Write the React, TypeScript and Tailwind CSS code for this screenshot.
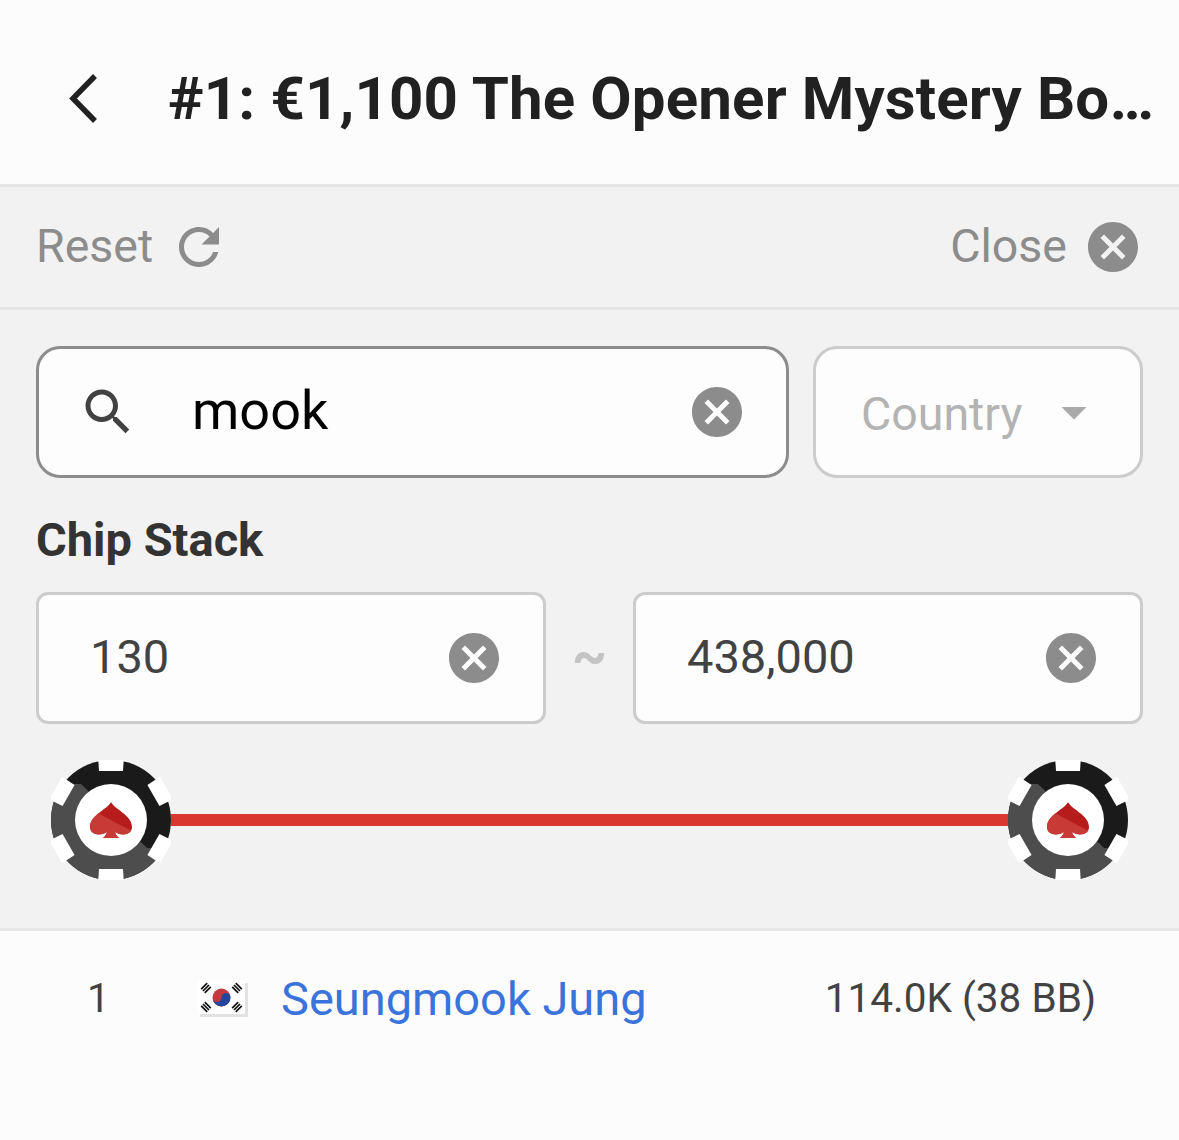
import React from 'react';

const ROBOTO = "font-['Roboto',sans-serif]";

function CancelIcon() {
  return (
    <svg viewBox="0 0 24 24" className="w-[60px] h-[60px] shrink-0" fill="#8c8c8c" aria-hidden="true">
      <path d="M12 2C6.47 2 2 6.47 2 12s4.47 10 10 10 10-4.47 10-10S17.53 2 12 2zm5 13.59L15.59 17 12 13.41 8.41 17 7 15.59 10.59 12 7 8.41 8.41 7 12 10.59 15.59 7 17 8.41 13.41 12 17 15.59z" />
    </svg>
  );
}

const SPADE =
  'M60 42C63 49 81 55 81 67C81 74 72 77 64 72C64.500 74 65.500 76 68 78H52C54.500 76 55.500 74 56 72C48 77 39 74 39 67C39 55 57 49 60 42Z';

function PokerChip() {
  const notches = [0, 60, 120, 180, 240, 300];
  return (
    <svg viewBox="0 0 120 120" className="w-[120px] h-[120px] shrink-0 blur-[0.6px]" aria-hidden="true">
      <defs>
        <clipPath id="chip-lower">
          <polygon points="0,120 0,24 30,24 96,88 120,88 120,120" />
        </clipPath>
        <clipPath id="spade-lower">
          <polygon points="30,44 90,76 90,100 30,100" />
        </clipPath>
      </defs>
      <circle cx="60" cy="60" r="60" fill="#1a1a1a" />
      <circle cx="60" cy="60" r="60" fill="#4d4d4d" clipPath="url(#chip-lower)" />
      {notches.map((deg) => (
        <polygon key={deg} points="47,-4 73,-4 72,11 48,11" fill="#ffffff" transform={`rotate(${deg} 60 60)`} />
      ))}
      <circle cx="60" cy="60" r="36" fill="#ffffff" />
      <path d={SPADE} fill="#b71c1c" />
      <path d={SPADE} fill="#c73a36" clipPath="url(#spade-lower)" />
    </svg>
  );
}

function KoreaFlag() {
  const trigram = (x: number, y: number, deg: number) => (
    <g transform={`translate(${x} ${y}) rotate(${deg}) scale(0.85)`} fill="#111111">
      <rect x="-5" y="-4" width="10" height="2" />
      <rect x="-5" y="-1" width="10" height="2" />
      <rect x="-5" y="2" width="10" height="2" />
    </g>
  );
  return (
    <svg viewBox="0 0 50 36" className="w-[50px] h-[36px] shrink-0 mt-[2px]" aria-hidden="true">
      <rect x="2" y="2" width="48" height="34" fill="#e2e2e2" />
      <rect x="0" y="0" width="47" height="33" fill="#ffffff" />
      {trigram(8, 7, -45)}
      {trigram(39, 7, 45)}
      {trigram(8, 26, 45)}
      {trigram(39, 26, -45)}
      <circle cx="23.500" cy="16.500" r="9" fill="#c4393f" />
      <path d="M14.500 16.500a4.500 4.500 0 0 0 9 0a4.500 4.500 0 0 1 9 0a9 9 0 0 1-18 0Z" fill="#23479c" />
    </svg>
  );
}

function StackInput({ value, width }: { value: string; width: string }) {
  return (
    <div className={`${width} h-[132px] flex items-center justify-between pl-[51px] pr-[39px] rounded-[12px] border-[3px] border-[#cccccc] bg-[#fdfdfd]`}>
      <span className="text-[47px] text-[#424242] -mt-[2px]">{value}</span>
      <CancelIcon />
    </div>
  );
}

export default function App() {
  return (
    <div className={`${ROBOTO} w-[1179px] h-[1140px] overflow-hidden flex flex-col bg-[#fcfcfc]`}>
      {/* Title bar */}
      <div className="h-[187px] shrink-0 flex items-center border-b-[3px] border-[#e5e5e5] pt-[14px] pl-[64px] pr-[18px]">
        <svg viewBox="0 0 40 60" className="w-[40px] h-[60px] shrink-0" fill="none" stroke="#212121" strokeWidth="5.500" aria-hidden="true">
          <path d="M31 7L9 29.500L31 52" />
        </svg>
        <h1 className="ml-[64px] min-w-0 flex-1 truncate text-[60px] font-bold text-[#212121] leading-[72px] tracking-[0.15px]">
          #1: €1,100 The Opener Mystery Bounty
        </h1>
      </div>

      {/* Filter panel */}
      <div className="h-[744px] shrink-0 flex flex-col bg-[#f2f2f2] border-b-[3px] border-[#e5e5e5]">
        <div className="h-[123px] shrink-0 flex items-center justify-between border-b-[3px] border-[#e5e5e5] pl-[36px] pr-[36px]">
          <div className="flex items-center gap-[21px]">
            <span className="text-[46.500px] text-[#8c8c8c]">Reset</span>
            <svg viewBox="0 0 24 24" className="w-[60px] h-[60px] -ml-[5px]" fill="#8c8c8c" aria-hidden="true">
              <path d="M17.650 6.350C16.200 4.900 14.210 4 12 4c-4.420 0-7.990 3.580-7.990 8s3.570 8 7.990 8c3.730 0 6.840-2.550 7.730-6h-2.080c-.82 2.330-3.040 4-5.650 4-3.310 0-6-2.690-6-6s2.690-6 6-6c1.660 0 3.140.69 4.220 1.780L13 11h7V4l-2.350 2.350z" />
            </svg>
          </div>
          <div className="flex items-center gap-[16px]">
            <span className="text-[46.500px] text-[#8c8c8c]">Close</span>
            <CancelIcon />
          </div>
        </div>

        <div className="flex-1 flex flex-col px-[36px] pt-[36px]">
          <div className="flex gap-[24px]">
            <div className="w-[753px] h-[132px] flex items-center rounded-[24px] border-[3px] border-[#8c8c8c] bg-[#fdfdfd] pl-[39px] pr-[39px]">
              <svg viewBox="0 0 24 24" className="w-[60px] h-[60px] shrink-0" fill="#424242" aria-hidden="true">
                <path d="M15.500 14h-.79l-.28-.27C15.410 12.590 16 11.110 16 9.500 16 5.910 13.090 3 9.500 3S3 5.910 3 9.500 5.910 16 9.500 16c1.610 0 3.090-.59 4.230-1.570l.27.28v.79l5 4.990L20.490 19l-4.990-5zm-6 0C7.010 14 5 11.990 5 9.500S7.010 5 9.500 5 14 7.010 14 9.500 11.990 14 9.500 14z" />
              </svg>
              <span className="ml-[54px] flex-1 text-[54px] text-black leading-none -mt-[2px]">mook</span>
              <CancelIcon />
            </div>
            <div className="w-[330px] h-[132px] flex items-center rounded-[24px] border-[3px] border-[#cccccc] bg-[#fdfdfd] pl-[45px]">
              <span className="text-[46.500px] text-[#b3b3b3] mt-[6px]">Country</span>
              <svg viewBox="0 0 24 24" className="w-[60px] h-[60px] ml-[22px]" fill="#aaaaaa" aria-hidden="true">
                <path d="M7 10l5 5 5-5z" />
              </svg>
            </div>
          </div>

          <div className="mt-[35px] text-[47px] font-bold text-[#333333] leading-[54px] h-[54px]">Chip Stack</div>

          <div className="mt-[25px] flex items-center">
            <StackInput value="130" width="w-[510px]" />
            <span className="w-[87px] text-center text-[54px] text-[#c4c4c4] font-bold -mt-[6px]">~</span>
            <StackInput value="438,000" width="w-[510px]" />
          </div>

          <div className="mt-[36px] flex items-center pl-[15px] pr-[15px]">
            <PokerChip />
            <div className="flex-1 h-[12px] bg-[#d93831]" />
            <PokerChip />
          </div>
        </div>
      </div>

      {/* Result row */}
      <div className="flex items-center h-[134px] shrink-0 pl-[87px] pr-[83px]">
        <span className="w-[111px] text-[40.500px] text-[#424242]">1</span>
        <KoreaFlag />
        <span className="ml-[33px] flex-1 text-[47px] text-[#3b73dc] mt-[2px]">Seungmook Jung</span>
        <span className="text-[40.500px] text-[#424242]">114.0K (38 BB)</span>
      </div>
    </div>
  );
}
